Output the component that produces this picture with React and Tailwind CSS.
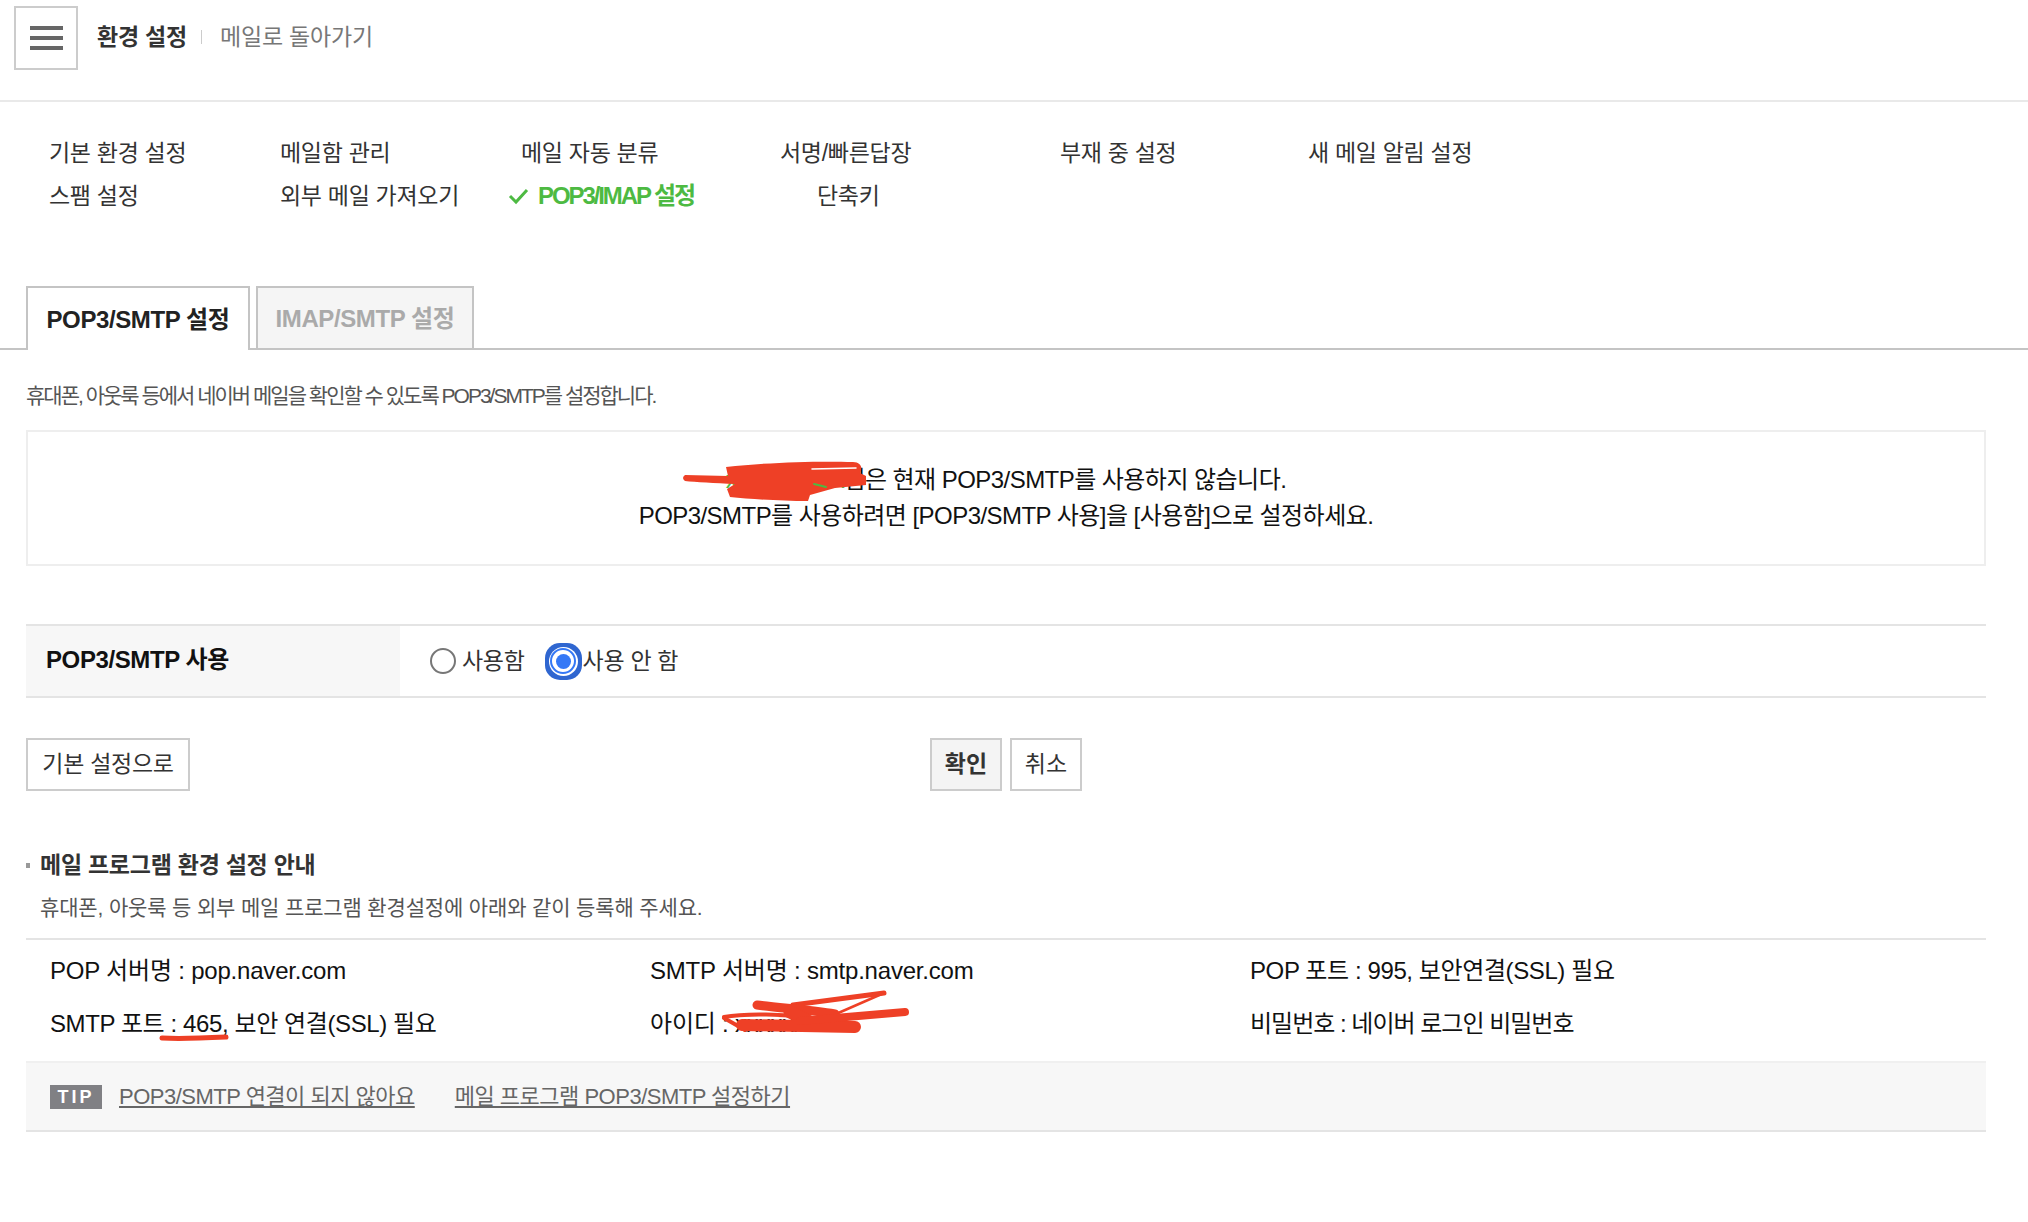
import React from 'react';

const FONT = '"Liberation Sans", "Noto Sans CJK KR", sans-serif';

function NavCol({ width, children }) {
  return <div className="flex flex-col gap-[13px]" style={{ width }}>{children}</div>;
}

function NavItem({ children, className = '' }) {
  return <a className={`block h-[30px] leading-[30px] text-[23px] tracking-[-0.3px] whitespace-nowrap text-[#333] ${className}`}>{children}</a>;
}

function Scribbles() {
  return (
    <svg className="absolute left-0 top-0 pointer-events-none" width="2028" height="1222" fill="none" stroke="#ee4026" strokeLinecap="round" strokeLinejoin="round">
      {/* nome coberto */}
      <path fill="#ee4026" stroke="none" d="M685 475 L728 476 L726 467 C770 462 820 461 853 462 C861 462 863 468 860 473 L866 476 L866 485 L835 488 L810 495 L808 501 C780 501 750 499 730 497 L727 489 L735 484 C715 483 695 482 685 481 Q681 478 685 475 Z" />
      <path d="M812 469 L856 468" stroke="#fff" strokeWidth="1.5" />
      <path d="M814 484 L826 487" stroke="#4dba42" strokeWidth="2" />
      {/* sublinhado 465 */}
      <path d="M162 1038 C180 1039 205 1038 226 1037" strokeWidth="5" />
      {/* id coberto */}
      <path d="M793 1005 L884 993" strokeWidth="5" />
      <path d="M884 993 L836 1014" strokeWidth="2.5" />
      <path d="M757 1005 C780 1008 810 1010 835 1014" strokeWidth="9" />
      <path d="M724 1017 C745 1013 790 1014 800 1018" strokeWidth="4" />
      <path d="M724 1018 L745 1030" strokeWidth="4" />
      <path d="M790 1012 L810 1022" strokeWidth="13" />
      <path d="M742 1025 L855 1027" strokeWidth="12" />
      <path d="M800 1021 L905 1012" strokeWidth="8" />
    </svg>
  );
}

export default function App() {
  return (
    <div className="relative w-[2028px] h-[1222px] bg-white overflow-hidden text-[#222]" style={{ fontFamily: FONT }}>
      {/* topo */}
      <header className="flex items-start h-[102px] border-b-2 border-[#e9e9e9] pl-[14px] pt-[6px]">
        <button className="w-[64px] h-[64px] border-2 border-[#ccc] flex flex-col justify-center items-center gap-[6px]">
          <span className="block w-[33px] h-[4px] bg-[#666]" />
          <span className="block w-[33px] h-[4px] bg-[#666]" />
          <span className="block w-[33px] h-[4px] bg-[#666]" />
        </button>
        <div className="flex items-center h-[62px] ml-[19px]">
          <strong className="text-[23px] tracking-[-0.2px] text-[#333]">환경 설정</strong>
          <span className="w-px h-[14px] bg-[#ccc] ml-[14px] mr-[18px]" />
          <a className="text-[23px] tracking-[-0.2px] text-[#777]">메일로 돌아가기</a>
        </div>
      </header>

      {/* menu */}
      <nav className="flex pl-[49px] pt-[36px] h-[184px]">
        <NavCol width={231}>
          <NavItem>기본 환경 설정</NavItem>
          <NavItem>스팸 설정</NavItem>
        </NavCol>
        <NavCol width={228}>
          <NavItem>메일함 관리</NavItem>
          <NavItem>외부 메일 가져오기</NavItem>
        </NavCol>
        <NavCol width={272}>
          <NavItem className="pl-[13px]">메일 자동 분류</NavItem>
          <a className="flex items-center gap-[8px] h-[30px] text-[24px] font-bold tracking-[-2.1px] text-[#4dba42] whitespace-nowrap">
            <svg width="22" height="18" viewBox="0 0 22 18" fill="none" stroke="#4dba42" strokeWidth="3"><path d="M2 9 L8 15 L19 3" /></svg>
            POP3/IMAP 설정
          </a>
        </NavCol>
        <NavCol width={280}>
          <NavItem>서명/빠른답장</NavItem>
          <NavItem className="pl-[37px]">단축키</NavItem>
        </NavCol>
        <NavCol width={248}>
          <NavItem>부재 중 설정</NavItem>
        </NavCol>
        <NavCol width={220}>
          <NavItem>새 메일 알림 설정</NavItem>
        </NavCol>
      </nav>

      {/* abas */}
      <div className="flex items-end h-[64px] pl-[26px] border-b-2 border-[#c4c4c4]">
        <div className="w-[224px] h-[64px] -mb-[2px] pt-[2px] border-2 border-b-0 border-[#c4c4c4] bg-white flex items-center justify-center text-[24px] font-bold tracking-[-0.4px] text-[#222]">POP3/SMTP 설정</div>
        <div className="w-[218px] h-[62px] ml-[6px] pt-[2px] border-2 border-b-0 border-[#c4c4c4] bg-[#f5f5f5] flex items-center justify-center text-[24px] font-bold tracking-[-0.4px] text-[#aaa]">IMAP/SMTP 설정</div>
      </div>

      <div className="pl-[26px] pr-[42px]">
        <p className="h-[30px] leading-[30px] mt-[31px] text-[21px] tracking-[-2px] text-[#555] whitespace-nowrap">휴대폰, 아웃룩 등에서 네이버 메일을 확인할 수 있도록 POP3/SMTP를 설정합니다.</p>

        {/* aviso */}
        <div className="h-[136px] mt-[19px] border-2 border-[#eee] flex flex-col items-center justify-center text-[24px] leading-[36px] tracking-[-0.55px] text-[#111]">
          <p><span className="text-[#4dba42] tracking-[-1.3px]">xxxxxxxxxxx</span>님은 현재 POP3/SMTP를 사용하지 않습니다.</p>
          <p>POP3/SMTP를 사용하려면 [POP3/SMTP 사용]을 [사용함]으로 설정하세요.</p>
        </div>

        {/* uso */}
        <div className="flex h-[74px] mt-[58px] border-y-2 border-[#e4e4e4]">
          <div className="w-[374px] bg-[#f7f7f7] flex items-center pl-[20px] pb-[2px] text-[24px] font-bold tracking-[-0.4px] text-[#111]">POP3/SMTP 사용</div>
          <div className="flex items-center pl-[30px] text-[23px] tracking-[-0.3px] text-[#333]">
            <span className="w-[26px] h-[26px] rounded-full border-2 border-[#777] mr-[6px]" />
            <span className="mr-[20px]">사용함</span>
            <span className="w-[37px] h-[37px] mr-[1px] rounded-[15px] bg-[#2f66d0] flex items-center justify-center">
              <span className="w-[29px] h-[29px] rounded-full bg-white flex items-center justify-center">
                <span className="w-[26px] h-[26px] rounded-full bg-white border-2 border-[#3478f6] flex items-center justify-center">
                  <span className="w-[15px] h-[15px] rounded-full bg-[#3478f6]" />
                </span>
              </span>
            </span>
            <span>사용 안 함</span>
          </div>
        </div>

        {/* botoes */}
        <div className="relative flex justify-center gap-[8px] mt-[40px]">
          <button className="absolute left-0 top-0 w-[164px] h-[53px] border-2 border-[#ccc] text-[23px] tracking-[-0.3px] text-[#333]">기본 설정으로</button>
          <button className="w-[72px] h-[53px] border-2 border-[#ccc] bg-[#f4f4f4] text-[23px] font-bold text-[#333]">확인</button>
          <button className="w-[72px] h-[53px] border-2 border-[#ccc] text-[23px] text-[#333]">취소</button>
        </div>

        {/* guia */}
        <div className="flex items-center mt-[57px] h-[34px]">
          <span className="w-[4px] h-[5px] bg-[#999] mr-[10px]" />
          <h3 className="text-[23px] font-bold tracking-[-0.25px] text-[#333]">메일 프로그램 환경 설정 안내</h3>
        </div>
        <p className="pl-[14px] mt-[9px] h-[34px] leading-[34px] text-[21px] tracking-[-0.15px] text-[#555]">휴대폰, 아웃룩 등 외부 메일 프로그램 환경설정에 아래와 같이 등록해 주세요.</p>

        <div className="mt-[13px] border-t-2 border-[#e4e4e4] pl-[24px] pt-[11px] grid grid-cols-[600px_600px_1fr] grid-rows-[40px_40px] gap-y-[13px] text-[24px] text-[#111] h-[123px]">
          <span className="leading-[40px] tracking-[-0.2px]">POP 서버명 : pop.naver.com</span>
          <span className="leading-[40px] tracking-[-0.2px]">SMTP 서버명 : smtp.naver.com</span>
          <span className="leading-[40px] tracking-[-0.4px]">POP 포트 : 995, 보안연결(SSL) 필요</span>
          <span className="leading-[40px] tracking-[-0.4px]">SMTP 포트 : 465, 보안 연결(SSL) 필요</span>
          <span className="leading-[40px] tracking-[-0.2px]">아이디 : xxxxxxxxx</span>
          <span className="leading-[40px] tracking-[-1px]">비밀번호 : 네이버 로그인 비밀번호</span>
        </div>

        {/* dicas */}
        <div className="h-[71px] bg-[#f7f7f7] border-t-2 border-b-2 border-t-[#f0f0f0] border-b-[#e4e4e4] flex items-center pl-[24px] text-[22px] tracking-[-0.5px] text-[#666]">
          <span className="w-[52px] h-[24px] bg-[#808084] text-white text-[18px] font-bold tracking-[3px] leading-[24px] text-center">TIP</span>
          <a className="underline ml-[17px]">POP3/SMTP 연결이 되지 않아요</a>
          <a className="underline ml-[40px]">메일 프로그램 POP3/SMTP 설정하기</a>
        </div>
      </div>

      <Scribbles />
    </div>
  );
}
